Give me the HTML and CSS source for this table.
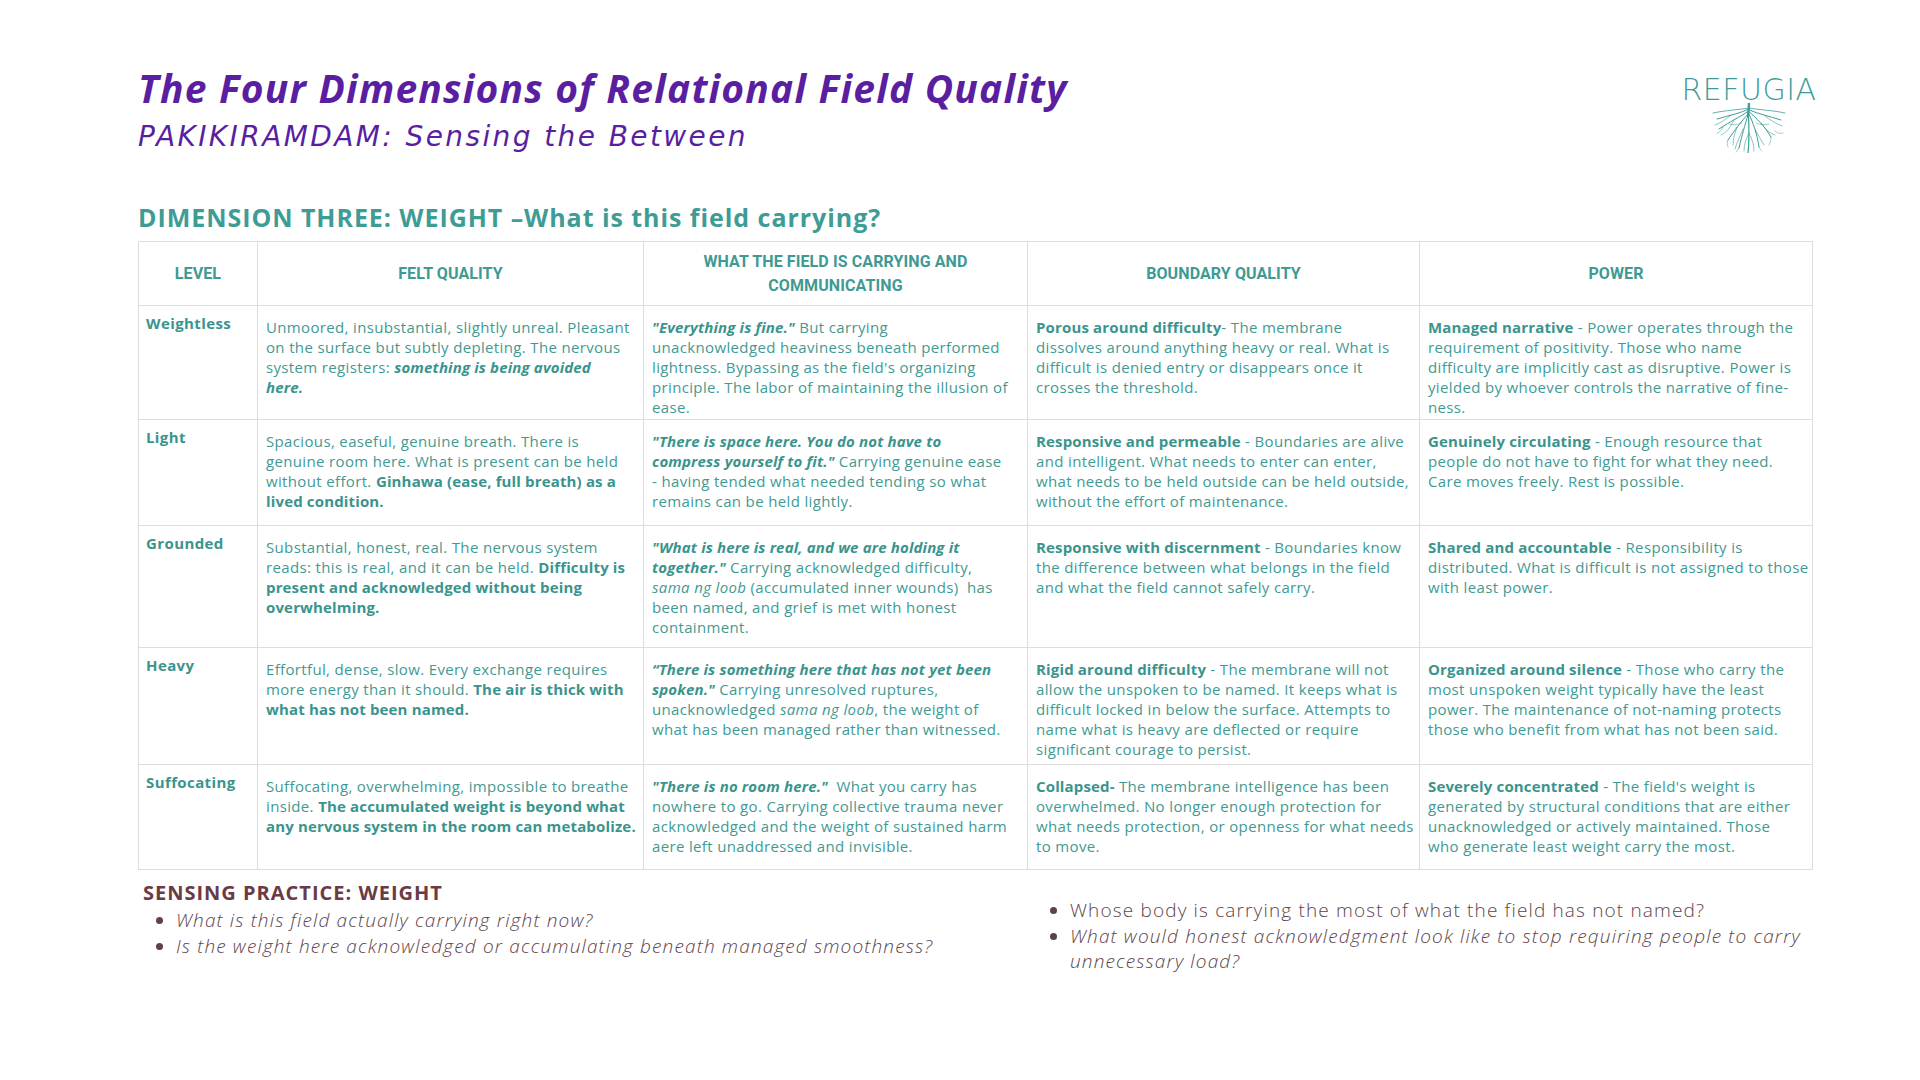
FILE: index.html
```html
<!DOCTYPE html>
<html lang="en">
<head>
<meta charset="utf-8">
<title>The Four Dimensions of Relational Field Quality</title>
<link rel="stylesheet" href="styles.css">
</head>
<body>
<div class="page">
  <header class="top">
    <div class="titles">
      <h1 class="title">The Four Dimensions of Relational Field Quality</h1>
      <p class="subtitle">PAKIKIRAMDAM: Sensing the Between</p>
    </div>
    <div class="logo">
      <div class="logo-word">REFUGIA</div>
      <svg class="roots" viewBox="0 0 80 50" width="84" height="50" aria-hidden="true">
        <g fill="none" stroke="#3f9c9a" stroke-linecap="round">
          <path d="M40 0 C40 5 39.5 9 39 13" stroke-width="2.4"/>
          <path d="M39.5 6 C32 10 22 12 8 16" stroke-width="1"/>
          <path d="M39.5 8 C31 14 22 18 10 26" stroke-width="1"/>
          <path d="M39 11 C33 18 27 25 19 37" stroke-width="1"/>
          <path d="M39 12 C36 22 33 32 30 45" stroke-width="1"/>
          <path d="M39.5 12 C40 24 40.5 36 39 50" stroke-width="1.2"/>
          <path d="M40 11 C44 20 48 30 50 44" stroke-width="1"/>
          <path d="M40.5 9 C47 15 55 22 62 34" stroke-width="1"/>
          <path d="M40.5 7 C49 11 60 13 72 17" stroke-width="1"/>
          <path d="M40.5 5 C50 7 62 7 76 10" stroke-width="0.8"/>
          <path d="M39.5 5 C30 7 18 7 4 10" stroke-width="0.8"/>
          <path d="M22 12 C17 16 12 20 6 22" stroke-width="0.6"/>
          <path d="M25 17 C22 24 17 30 12 32" stroke-width="0.6"/>
          <path d="M28 24 C26 30 24 36 24 42" stroke-width="0.6"/>
          <path d="M34 26 C32 32 28 38 26 46" stroke-width="0.6"/>
          <path d="M40 30 C37 36 35 41 35 48" stroke-width="0.6"/>
          <path d="M40 30 C43 36 45 41 45 48" stroke-width="0.6"/>
          <path d="M46 26 C49 32 52 37 55 42" stroke-width="0.6"/>
          <path d="M52 20 C56 26 60 30 66 32" stroke-width="0.6"/>
          <path d="M56 13 C61 17 66 20 73 23" stroke-width="0.6"/>
          <path d="M14 24 C12 28 10 30 8 30" stroke-width="0.5"/>
          <path d="M66 28 C68 30 71 31 74 30" stroke-width="0.5"/>
          <path d="M19 37 C18 40 18 42 19 44" stroke-width="0.5"/>
          <path d="M62 34 C62 38 61 40 60 42" stroke-width="0.5"/>
          <path d="M30 45 C29 47 28 48 27 49" stroke-width="0.5"/>
          <path d="M50 44 C51 46 52 47 53 48" stroke-width="0.5"/>
          <path d="M33 20 C29 22 25 22 20 21" stroke-width="0.5"/>
          <path d="M47 20 C51 22 55 22 60 21" stroke-width="0.5"/>
        </g>
      </svg>
    </div>
  </header>

  <h2 class="dimension">DIMENSION THREE: WEIGHT –What is this field carrying?</h2>

  <table class="grid">
    <colgroup>
      <col class="c-level">
      <col class="c-felt">
      <col class="c-carry">
      <col class="c-bound">
      <col class="c-power">
    </colgroup>
    <thead>
      <tr class="r-head">
        <th>LEVEL</th>
        <th>FELT QUALITY</th>
        <th>WHAT THE FIELD IS CARRYING AND<br>COMMUNICATING</th>
        <th>BOUNDARY QUALITY</th>
        <th>POWER</th>
      </tr>
    </thead>
    <tbody>
      <tr class="r1">
        <td class="level">Weightless</td>
        <td>Unmoored, insubstantial, slightly unreal. Pleasant<br>on the surface but subtly depleting. The nervous<br>system registers: <b><i>something is being avoided<br>here.</i></b></td>
        <td><b><i>"Everything is fine."</i></b> But carrying<br>unacknowledged heaviness beneath performed<br>lightness. Bypassing as the field's organizing<br>principle. The labor of maintaining the illusion of<br>ease.</td>
        <td><b>Porous around difficulty</b>- The membrane<br>dissolves around anything heavy or real. What is<br>difficult is denied entry or disappears once it<br>crosses the threshold.</td>
        <td><b>Managed narrative</b> - Power operates through the<br>requirement of positivity. Those who name<br>difficulty are implicitly cast as disruptive. Power is<br>yielded by whoever controls the narrative of fine-<br>ness.</td>
      </tr>
      <tr class="r2">
        <td class="level">Light</td>
        <td>Spacious, easeful, genuine breath. There is<br>genuine room here. What is present can be held<br>without effort. <b>Ginhawa (ease, full breath) as a<br>lived condition.</b></td>
        <td><b><i>"There is space here. You do not have to<br>compress yourself to fit."</i></b> Carrying genuine ease<br>- having tended what needed tending so what<br>remains can be held lightly.</td>
        <td><b>Responsive and permeable</b> - Boundaries are alive<br>and intelligent. What needs to enter can enter,<br>what needs to be held outside can be held outside,<br>without the effort of maintenance.</td>
        <td><b>Genuinely circulating</b> - Enough resource that<br>people do not have to fight for what they need.<br>Care moves freely. Rest is possible.</td>
      </tr>
      <tr class="r3">
        <td class="level">Grounded</td>
        <td>Substantial, honest, real. The nervous system<br>reads: this is real, and it can be held. <b>Difficulty is<br>present and acknowledged without being<br>overwhelming.</b></td>
        <td><b><i>"What is here is real, and we are holding it<br>together."</i></b> Carrying acknowledged difficulty,<br><i>sama ng loob</i> (accumulated inner wounds)&nbsp; has<br>been named, and grief is met with honest<br>containment.</td>
        <td><b>Responsive with discernment</b> - Boundaries know<br>the difference between what belongs in the field<br>and what the field cannot safely carry.</td>
        <td><b>Shared and accountable</b> - Responsibility is<br>distributed. What is difficult is not assigned to those<br>with least power.</td>
      </tr>
      <tr class="r4">
        <td class="level">Heavy</td>
        <td>Effortful, dense, slow. Every exchange requires<br>more energy than it should. <b>The air is thick with<br>what has not been named.</b></td>
        <td><b><i>“There is something here that has not yet been<br>spoken."</i></b> Carrying unresolved ruptures,<br>unacknowledged <i>sama ng loob</i>, the weight of<br>what has been managed rather than witnessed.</td>
        <td><b>Rigid around difficulty</b> - The membrane will not<br>allow the unspoken to be named. It keeps what is<br>difficult locked in below the surface. Attempts to<br>name what is heavy are deflected or require<br>significant courage to persist.</td>
        <td><b>Organized around silence</b> - Those who carry the<br>most unspoken weight typically have the least<br>power. The maintenance of not-naming protects<br>those who benefit from what has not been said.</td>
      </tr>
      <tr class="r5">
        <td class="level">Suffocating</td>
        <td>Suffocating, overwhelming, impossible to breathe<br>inside. <b>The accumulated weight is beyond what<br>any nervous system in the room can metabolize.</b></td>
        <td><b><i>"There is no room here."</i></b>&nbsp; What you carry has<br>nowhere to go. Carrying collective trauma never<br>acknowledged and the weight of sustained harm<br>aere left unaddressed and invisible.</td>
        <td><b>Collapsed-</b> The membrane intelligence has been<br>overwhelmed. No longer enough protection for<br>what needs protection, or openness for what needs<br>to move.</td>
        <td><b>Severely concentrated</b> - The field's weight is<br>generated by structural conditions that are either<br>unacknowledged or actively maintained. Those<br>who generate least weight carry the most.</td>
      </tr>
    </tbody>
  </table>

  <section class="practice">
    <div class="practice-left">
      <h3 class="practice-title">SENSING PRACTICE: WEIGHT</h3>
      <ul class="questions left-q">
        <li><i>What is this field actually carrying right now?</i></li>
        <li><i>Is the weight here acknowledged or accumulating beneath managed smoothness?</i></li>
      </ul>
    </div>
    <div class="practice-right">
      <ul class="questions right-q">
        <li>Whose body is carrying the most of what the field has not named?</li>
        <li><i>What would honest acknowledgment look like to stop requiring people to carry unnecessary load?</i></li>
      </ul>
    </div>
  </section>
</div>
</body>
</html>
```

FILE: styles.css
```css
* { box-sizing: border-box; }

html, body {
  margin: 0;
  padding: 0;
  background: #ffffff;
}

body {
  font-family: "Open Sans", "DejaVu Sans", sans-serif;
  color: #3f9a93;
  width: 1920px;
  height: 1080px;
  overflow: hidden;
}

.page {
  padding: 64px 108px 0 138px;
}

.top {
  display: flex;
  justify-content: space-between;
  align-items: flex-start;
}

.title {
  margin: 0;
  font-family: "Open Sans", sans-serif;
  font-weight: 700;
  font-style: italic;
  font-size: 39px;
  line-height: 48px;
  color: #5a1fa0;
  letter-spacing: 1.2px;
}

.subtitle {
  margin: 5px 0 0 0;
  font-family: "DejaVu Sans", "Open Sans", sans-serif;
  font-weight: 200;
  font-style: italic;
  font-size: 28px;
  line-height: 40px;
  color: #5a1fa0;
  letter-spacing: 2.4px;
}

.logo {
  margin-top: 11px;
  width: 126px;
  display: flex;
  flex-direction: column;
  align-items: center;
}

.logo-word {
  font-family: "DejaVu Sans", sans-serif;
  font-weight: 200;
  font-size: 30px;
  line-height: 30px;
  letter-spacing: 0.5px;
  color: #3f9c9a;
}

.roots {
  display: block;
  margin-top: -2px;
}

.dimension {
  margin: 44px 0 8px 0;
  font-family: "Open Sans", sans-serif;
  font-weight: 700;
  font-size: 25px;
  line-height: 32px;
  color: #3e9c95;
  letter-spacing: 0.95px;
}

.grid {
  width: 1674px;
  border-collapse: collapse;
  table-layout: fixed;
}

.c-level { width: 119px; }
.c-felt { width: 386px; }
.c-carry { width: 384px; }
.c-bound { width: 392px; }
.c-power { width: 393px; }

.grid th,
.grid td {
  border: 1px solid #dddddd;
}

.grid th {
  font-family: Roboto, "Open Sans", sans-serif;
  font-weight: 700;
  font-size: 16px;
  line-height: 24px;
  color: #3e9a93;
  text-align: center;
  vertical-align: middle;
  padding: 0 8px;
  letter-spacing: 0.1px;
}

.grid td {
  font-size: 15px;
  line-height: 20px;
  letter-spacing: 0.35px;
  vertical-align: top;
  padding: 11px 2px 0 8px;
  color: #3f9a93;
}

.grid td b { font-weight: 700; color: #3a948d; letter-spacing: 0.15px; }

.grid td.level {
  font-weight: 700;
  font-size: 15px;
  letter-spacing: 0.4px;
  padding-top: 7px;
  padding-left: 7px;
  color: #3a948d;
}

.r-head { height: 64px; }
.r1 { height: 114px; }
.r2 { height: 106px; }
.r3 { height: 122px; }
.r4 { height: 117px; }
.r5 { height: 105px; }

.practice {
  display: flex;
}

.practice-left {
  width: 902px;
  padding-top: 10px;
}

.practice-right {
  flex: 1;
  padding-top: 28px;
}

.practice-title {
  margin: 0 0 2px 5px;
  font-family: "Open Sans", sans-serif;
  font-weight: 700;
  font-size: 20px;
  line-height: 26px;
  color: #6a3b45;
  letter-spacing: 1px;
}

.questions {
  margin: 0;
  list-style: disc;
  color: #5c434a;
  font-size: 19px;
  line-height: 25.5px;
  font-weight: 300;
  letter-spacing: 1.15px;
}

.questions li::marker { color: #5c434a; }

.left-q { padding-left: 38px; }
.right-q { padding-left: 30px; }
```
